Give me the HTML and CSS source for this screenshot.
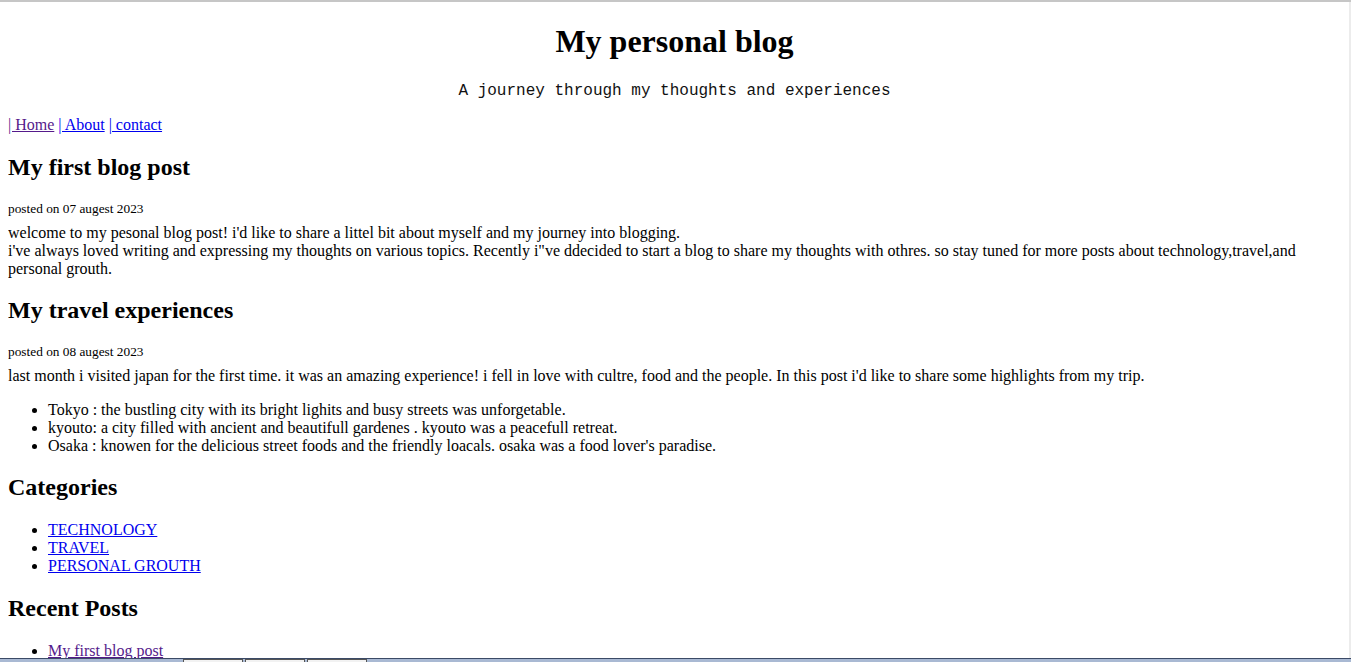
FILE: index.html
```html
<!DOCTYPE html>
<html lang="en">
<head>
<meta charset="utf-8">
<title>My personal blog</title>
<link rel="stylesheet" href="styles.css">
</head>
<body>
<header class="site-header">
  <h1>My personal blog</h1>
  <p class="tagline">A journey through my thoughts and experiences</p>
</header>
<nav class="nav">
  <a class="visited" href="#">| Home</a> <a href="#">| About</a> <a href="#">| contact</a>
</nav>
<main>
  <article class="post">
    <h2>My first blog post</h2>
    <p class="date">posted on 07 augest 2023</p>
    <p class="body">welcome to my pesonal blog post! i'd like to share a littel bit about myself and my journey into blogging.<br>i've always loved writing and expressing my thoughts on various topics. Recently i"ve ddecided to start a blog to share my thoughts with othres. so stay tuned for more posts about technology,travel,and personal grouth.</p>
  </article>
  <article class="post post-next">
    <h2>My travel experiences</h2>
    <p class="date">posted on 08 augest 2023</p>
    <p class="body">last month i visited japan for the first time. it was an amazing experience! i fell in love with cultre, food and the people. In this post i'd like to share some highlights from my trip.</p>
    <ul>
      <li>Tokyo : the bustling city with its bright lighits and busy streets was unforgetable.</li>
      <li>kyouto: a city filled with ancient and beautifull gardenes . kyouto was a peacefull retreat.</li>
      <li>Osaka : knowen for the delicious street foods and the friendly loacals. osaka was a food lover's paradise.</li>
    </ul>
  </article>
</main>
<aside>
  <h2>Categories</h2>
  <ul>
    <li><a href="#">TECHNOLOGY</a></li>
    <li><a href="#">TRAVEL</a></li>
    <li><a href="#">PERSONAL GROUTH</a></li>
  </ul>
  <h2>Recent Posts</h2>
  <ul>
    <li><a class="visited" href="#">My first blog post</a></li>
    <li><a href="#">My travel experiences</a></li>
  </ul>
</aside>
<div class="scroll-edge"></div>
<div class="taskbar">
  <span class="tb-btn"></span>
  <span class="tb-btn"></span>
  <span class="tb-btn"></span>
</div>
</body>
</html>
```
FILE: styles.css
```css
html {
  border-top: 2px solid #c6c6c6;
}
body {
  margin: 8px;
  margin-right: 10px;
  font-family: "Liberation Serif", "Times New Roman", serif;
  font-size: 16px;
  color: #000;
  background: #fff;
}
h1 {
  font-size: 32px;
  margin: 13.44px 0 21.44px;
  text-align: center;
}
.tagline {
  text-align: center;
  font-family: "Liberation Mono", "Courier New", monospace;
  font-size: 16px;
  color: #111;
  margin: 16px 0;
}
.nav {
  margin: 16px 0;
}
a {
  color: #0000ee;
}
a.visited {
  color: #551a8b;
}
h2 {
  font-size: 24px;
  margin: 19.92px 0;
}
.post-next h2 {
  margin-top: 18.92px;
}
.date {
  font-size: 13.33px;
  margin: 19.92px 0 7px;
}
.body {
  margin: 0 0 16px;
}
ul {
  margin: 16px 0;
  padding-left: 40px;
}
.scroll-edge {
  position: fixed;
  top: 2px;
  right: 0;
  width: 2px;
  bottom: 0;
  background: #ececec;
}
.taskbar {
  position: fixed;
  left: 0;
  right: 0;
  bottom: 0;
  height: 3px;
  background: #a9b9d3;
  border-top: 1px solid #3b4a66;
  display: flex;
  gap: 2px;
  padding-left: 183px;
}
.tb-btn {
  width: 58px;
  height: 3px;
  border: 1px solid #555;
  border-bottom: 0;
  background: #f2f2f2;
}
```
